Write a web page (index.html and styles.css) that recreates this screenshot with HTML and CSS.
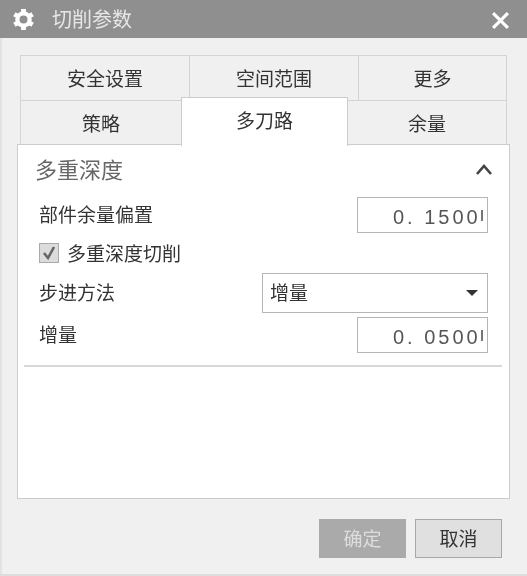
FILE: index.html
```html
<!doctype html>
<html>
<head>
<meta charset="utf-8">
<title>切削参数</title>
<link rel="stylesheet" href="styles.css">
</head>

<body>
	<div class="dialog">
		<div class="titlebar">
			<svg class="gear" viewBox="0 0 24 24">
				<circle cx="12" cy="12" r="8.6" fill="#fff"/>
				<g stroke="#fff" stroke-width="5">
					<path d="M12 1V23"/>
					<path d="M2.5 6.5L21.5 17.5"/>
					<path d="M2.5 17.5L21.5 6.5"/>
				</g>
				<circle cx="12" cy="12" r="4.2" fill="#8f8f8f"/>
			</svg>
			<span class="title">切削参数</span>
			<svg class="close" viewBox="0 0 18 18">
				<path d="M2 2L16 16M16 2L2 16" stroke="#fff" stroke-width="3" fill="none"/>
			</svg>
		</div>
		<div class="content">
			<div class="tabrow">
				<div class="tab w1">安全设置</div>
				<div class="tab w2">空间范围</div>
				<div class="tab w3">更多</div>
			</div>
			<div class="tabrow second">
				<div class="tab w4">策略</div>
				<div class="tab active">多刀路</div>
				<div class="tab w5">余量</div>
			</div>
			<div class="panel">
				<div class="group-head">
					<span class="group-title">多重深度</span>
					<svg class="chevron" viewBox="0 0 18 12">
						<path d="M2 11L9 3L16 11" stroke="#444" stroke-width="2.6" fill="none"/>
					</svg>
				</div>
				<div class="row row-first">
					<span class="label">部件余量偏置</span>
					<div class="field"><span class="num">0. 1500</span></div>
				</div>
				<div class="check-row">
					<span class="checkbox">
						<svg viewBox="0 0 18 18"><path d="M4 9L8 14L14 3" stroke="#666" stroke-width="2.6" fill="none"/></svg>
					</span>
					<span class="label">多重深度切削</span>
				</div>
				<div class="row row-select">
					<span class="label">步进方法</span>
					<div class="select"><span class="label">增量</span><i class="arrow"></i></div>
				</div>
				<div class="row row-last">
					<span class="label">增量</span>
					<div class="field"><span class="num">0. 0500</span></div>
				</div>
				<div class="divider"></div>
			</div>
			<div class="buttons">
				<div class="btn btn-off">确定</div>
				<div class="btn">取消</div>
			</div>
		</div>
	</div>
</body>

</html>
```

FILE: styles.css
```css
html{
	background-color: #f0f0f0;
}
body{
	margin: 0;
	font-family: "Noto Sans CJK SC", "Liberation Sans", sans-serif;
	font-size: 19px;
	color: #333;
}
.dialog{
	width: 527px;
	height: 576px;
	box-sizing: border-box;
	background-color: #f0f0f0;
	border-bottom: 2px solid #ddd;
	overflow: hidden;
	filter: blur(0.6px);
}
.titlebar{
	height: 38px;
	background-color: #8f8f8f;
	display: flex;
	align-items: center;
	padding: 0 17px 0 12px;
}
.gear{
	width: 23px;
	height: 23px;
}
.title{
	margin-left: 17px;
	margin-top: -1px;
	color: #e6e6e6;
	font-size: 20px;
	flex: 1;
}
.close{
	width: 19px;
	height: 19px;
	margin-top: 3px;
}
.content{
	box-sizing: border-box;
	height: 536px;
	border-left: 2px solid #e2e2e2;
	padding: 17px 15px 0 15px;
}
.tabrow{
	display: flex;
	height: 45px;
	padding-left: 3px;
}
.tabrow.second{
	height: 44px;
}
.tab{
	box-sizing: border-box;
	background-color: #f0f0f0;
	border: 1px solid #d4d4d4;
	border-bottom: none;
	text-align: center;
	line-height: 43px;
	margin-right: -1px;
}
.w1{ width: 170px; }
.w2{ width: 170px; }
.w3{ width: 149px; }
.w4{ width: 162px; }
.w5{ width: 160px; }
.tab.active{
	width: 167px;
	height: 49px;
	margin-top: -3px;
	background-color: #fff;
	border-color: #ccc;
	line-height: 44px;
	position: relative;
	z-index: 2;
}
.panel{
	box-sizing: border-box;
	width: 493px;
	height: 355px;
	background-color: #fff;
	border: 1px solid #ccc;
	padding: 0 21px 0 7px;
	position: relative;
	z-index: 1;
}
.group-head{
	display: flex;
	justify-content: space-between;
	align-items: center;
	height: 52px;
	padding: 0 0 0 10px;
	margin-right: -5px;
}
.group-title{
	font-size: 22px;
	line-height: 46px;
	margin-top: -6px;
	color: #666;
}
.chevron{
	width: 18px;
	height: 12px;
	margin-top: -4px;
}
.row{
	display: flex;
	justify-content: space-between;
	align-items: center;
	padding-left: 14px;
}
.label{
	margin-top: -3px;
}
.row-first{
	height: 36px;
}
.row-select{
	height: 40px;
	margin-top: 10px;
}
.row-last{
	height: 36px;
	margin-top: 4px;
}
.field{
	box-sizing: border-box;
	width: 131px;
	height: 36px;
	border: 1px solid #b5b5b5;
	white-space: nowrap;
	padding-left: 35px;
	line-height: 35px;
	position: relative;
}
.field::after{
	content: "";
	position: absolute;
	right: 4px;
	top: 12px;
	width: 2px;
	height: 11px;
	background-color: #777;
}
.num{
	font-family: "Liberation Sans", sans-serif;
	font-size: 20px;
	letter-spacing: 3px;
	color: #555;
}
.check-row{
	display: flex;
	align-items: center;
	height: 20px;
	margin-top: 10px;
	padding-left: 14px;
}
.check-row .label{
	margin-top: -2px;
}
.checkbox{
	box-sizing: border-box;
	width: 20px;
	height: 20px;
	margin-right: 8px;
	background-color: #dcdcdc;
	border: 1px solid #aaa;
	display: flex;
}
.select{
	box-sizing: border-box;
	width: 226px;
	height: 40px;
	border: 1px solid #b5b5b5;
	display: flex;
	align-items: center;
	justify-content: space-between;
	padding: 0 9px 0 7px;
}
.arrow{
	width: 0;
	height: 0;
	border-left: 6px solid transparent;
	border-right: 6px solid transparent;
	border-top: 6px solid #333;
}
.divider{
	height: 2px;
	background-color: #d8d8d8;
	margin-top: 12px;
	margin-left: -1px;
	margin-right: -14px;
}
.buttons{
	display: flex;
	justify-content: flex-end;
	gap: 9px;
	margin-top: 20px;
	padding-right: 10px;
}
.btn{
	box-sizing: border-box;
	width: 87px;
	height: 39px;
	line-height: 35px;
	text-align: center;
	background-color: #e0e0e0;
	border: 1px solid #a8a8a8;
}
.btn-off{
	background-color: #aaa;
	border-color: #aaa;
	color: #ddd;
}
```
